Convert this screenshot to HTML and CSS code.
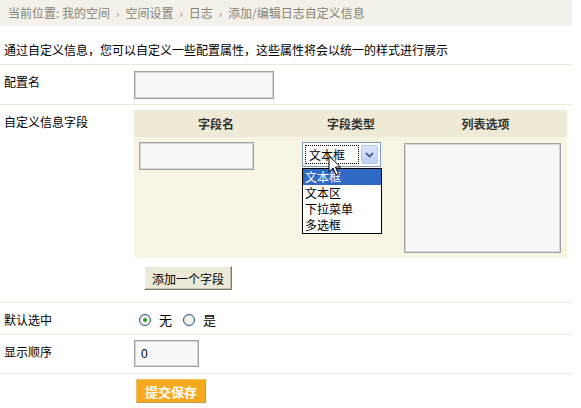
FILE: index.html
```html
<!DOCTYPE html>
<html lang="zh-CN">
<head>
<meta charset="utf-8">
<title>添加/编辑日志自定义信息</title>
<link rel="stylesheet" href="styles.css">
</head>
<body>
<div class="page">
  <div class="crumb">当前位置: <span>我的空间</span><span class="sep">›</span><span>空间设置</span><span class="sep">›</span><span>日志</span><span class="sep">›</span><span>添加/编辑日志自定义信息</span></div>
  <p class="intro">通过自定义信息，您可以自定义一些配置属性，这些属性将会以统一的样式进行展示</p>

  <div class="row r-name">
    <div class="label">配置名</div>
    <div class="field"><input class="text w-name" type="text"></div>
  </div>

  <div class="row r-fields">
    <div class="label">自定义信息字段</div>
    <div class="field">
      <div class="ftable">
        <div class="fhead">
          <div class="c1">字段名</div>
          <div class="c2">字段类型</div>
          <div class="c3">列表选项</div>
        </div>
        <div class="fbody">
          <div class="c1"><input class="text w-fname" type="text"></div>
          <div class="c2">
            <div class="combo">
              <div class="combo-box">
                <span class="combo-val">文本框</span>
                <span class="combo-btn">
                  <svg width="9" height="6" viewBox="0 0 9 6"><path d="M1 1 L4.5 4.5 L8 1" fill="none" stroke="#4d6185" stroke-width="1.8"/></svg>
                </span>
              </div>
              <ul class="combo-list">
                <li class="on">文本框</li>
                <li>文本区</li>
                <li>下拉菜单</li>
                <li>多选框</li>
              </ul>
              <svg class="pointer" width="14" height="22" viewBox="0 0 14 22"><path d="M1 1 L1 17 L5 13 L8 20 L10.5 19 L7.5 12 L12.5 12 Z" fill="#fff" stroke="#000" stroke-width="1" stroke-linejoin="miter"/></svg>
            </div>
          </div>
          <div class="c3"><textarea class="opts"></textarea></div>
        </div>
      </div>
      <button class="btn-add" type="button">添加一个字段</button>
    </div>
  </div>

  <div class="row r-default">
    <div class="label">默认选中</div>
    <div class="field radios">
      <span class="radio checked"></span><span class="rlabel">无</span>
      <span class="radio"></span><span class="rlabel">是</span>
    </div>
  </div>

  <div class="row r-order">
    <div class="label">显示顺序</div>
    <div class="field"><input class="text w-order" type="text" value="0"></div>
  </div>

  <div class="submit-row">
    <button class="btn-submit" type="button">提交保存</button>
  </div>
</div>
</body>
</html>
```

FILE: styles.css
```css
body {
  margin: 0;
  background: #fff;
  font-family: "Noto Sans CJK SC", "Liberation Sans", sans-serif;
  font-size: 12px;
  color: #000;
}

.page {
  width: 572px;
}

/* breadcrumb */
.crumb {
  height: 26px;
  line-height: 26px;
  padding-left: 8px;
  background: #f3f1ea;
  color: #858476;
  font-size: 12px;
}
.crumb .sep {
  margin: 0 6px;
  font-size: 11px;
}

.intro {
  margin: 0;
  padding: 17px 4px 7px;
  line-height: 14px;
  border-bottom: 1px solid #ece7d6;
}

/* form rows */
.row {
  display: grid;
  grid-template-columns: 134px 1fr;
  border-bottom: 1px solid #ece7d6;
}
.label {
  padding: 10px 0 0 4px;
  line-height: 14px;
}

.text {
  box-sizing: border-box;
  margin: 0;
  padding: 0 6px;
  border: 1px solid #a2a2a2;
  box-shadow: inset 1px 1px 0 #d6d6d6, inset -1px -1px 0 #d6d6d6;
  background: #f8f8f8;
  font-family: "Liberation Sans", sans-serif;
  font-size: 12px;
  color: #000;
  outline: none;
  display: block;
}

.r-name .field {
  padding: 6px 0 5px;
}
.w-name {
  width: 140px;
  height: 28px;
}

/* field table */
.r-fields .field {
  padding: 5px 0 12px;
}
.ftable {
  width: 433px;
}
.fhead,
.fbody {
  display: grid;
  grid-template-columns: 164px 106px 163px;
}
.fhead {
  height: 27px;
  line-height: 27px;
  background: #eeead6;
  font-weight: bold;
  color: #333;
  text-align: center;
}
.fbody {
  background: #f7f4e4;
  padding: 5px 0;
}
.fbody .c1 {
  padding-left: 5px;
}
.fbody .c2 {
  padding-left: 4px;
}
.w-fname {
  width: 115px;
  height: 28px;
}
.opts {
  box-sizing: border-box;
  display: block;
  margin: 1px 0 0 0;
  width: 157px;
  height: 110px;
  border: 1px solid #a2a2a2;
  box-shadow: inset 1px 1px 0 #d6d6d6, inset -1px -1px 0 #d6d6d6;
  background: #f8f8f8;
  resize: none;
  outline: none;
}

/* open dropdown */
.combo {
  position: relative;
  width: 80px;
}
.combo-box {
  box-sizing: border-box;
  width: 79px;
  height: 25px;
  border: 1px solid #7f9db9;
  background: #fff;
  display: flex;
  align-items: center;
  padding: 0 2px;
}
.combo-val {
  box-sizing: border-box;
  width: 54px;
  height: 19px;
  line-height: 17px;
  border: 1px dotted #000;
  padding-left: 3px;
}
.combo-btn {
  box-sizing: border-box;
  margin-left: 2px;
  width: 17px;
  height: 19px;
  border: 1px solid #b6c9ec;
  border-radius: 2px;
  background: linear-gradient(#dbe6fc, #bdd0f9);
  display: flex;
  align-items: center;
  justify-content: center;
}
.combo-list {
  position: absolute;
  left: 0;
  top: 26px;
  box-sizing: border-box;
  width: 80px;
  margin: 0;
  padding: 0;
  list-style: none;
  background: #fff;
  border: 1px solid #000;
  z-index: 2;
}
.combo-list li {
  height: 16px;
  line-height: 16px;
  padding-left: 2px;
}
.combo-list li.on {
  background: #316ac5;
  color: #fff;
}
.pointer {
  position: absolute;
  left: 26px;
  top: 13px;
  z-index: 3;
}

.btn-add {
  display: block;
  margin: 8px 0 0 10px;
  width: 88px;
  height: 24px;
  padding: 0;
  background: #ece9d8;
  border: 1px solid;
  border-color: #fff #7a7a6c #7a7a6c #fff;
  box-shadow: inset -1px -1px 0 #c6c2b0;
  font-family: inherit;
  font-size: 12px;
  color: #000;
}

/* radios */
.r-default {
  height: 31px;
}
.radios {
  display: flex;
  align-items: center;
  padding-top: 2px;
}
.radio {
  box-sizing: border-box;
  width: 12px;
  height: 12px;
  border-radius: 50%;
  border: 1px solid #1c5180;
  background: radial-gradient(circle at 60% 60%, #f4f4ef 40%, #d8d8cf 100%);
  margin-left: 5px;
  position: relative;
}
.radio.checked::after {
  content: "";
  position: absolute;
  left: 3px;
  top: 3px;
  width: 4px;
  height: 4px;
  border-radius: 50%;
  background: #21a121;
}
.rlabel {
  margin: 0 6px 0 8px;
  line-height: 14px;
  font-size: 13px;
}

.r-order .field {
  padding: 5px 0 6px;
}
.w-order {
  width: 65px;
  height: 27px;
}

.submit-row {
  padding: 5px 0 0 136px;
}
.btn-submit {
  display: block;
  width: 70px;
  height: 24px;
  padding: 0;
  background: #f5a91f;
  border: 1px solid;
  border-color: #f7c060 #c49a55 #c49a55 #f7c060;
  color: #fff;
  font-family: inherit;
  font-weight: bold;
  font-size: 13px;
}
```
